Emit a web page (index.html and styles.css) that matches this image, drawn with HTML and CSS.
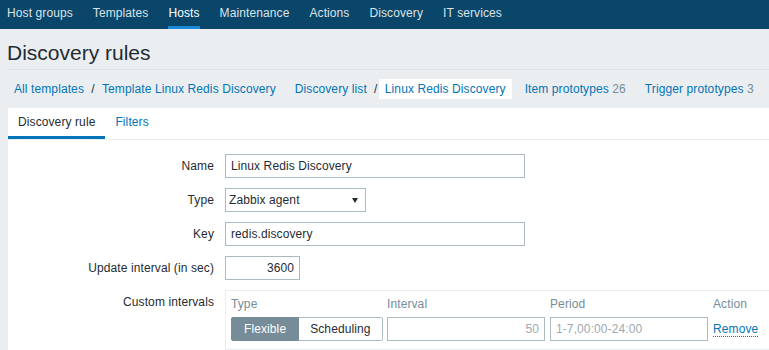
FILE: index.html
```html
<!DOCTYPE html>
<html lang="en">
<head>
<meta charset="utf-8">
<title>Discovery rules</title>
<link rel="stylesheet" href="styles.css">
</head>
<body>
<header class="topnav">
  <ul>
    <li><a href="#">Host groups</a></li>
    <li><a href="#">Templates</a></li>
    <li><a href="#" class="active">Hosts</a></li>
    <li><a href="#">Maintenance</a></li>
    <li><a href="#">Actions</a></li>
    <li><a href="#">Discovery</a></li>
    <li><a href="#">IT services</a></li>
  </ul>
</header>
<main class="page">
  <div class="page-title"><h1>Discovery rules</h1></div>
  <nav class="crumbs">
    <div class="crumb-group">
      <a href="#">All templates</a><span class="sep">/</span><a href="#">Template Linux Redis Discovery</a>
    </div>
    <div class="crumb-group">
      <a href="#">Discovery list</a><span class="sep">/</span><span class="current">Linux Redis Discovery</span>
    </div>
    <div class="crumb-group"><a href="#">Item prototypes <span class="count">26</span></a></div>
    <div class="crumb-group"><a href="#">Trigger prototypes <span class="count">3</span></a></div>
  </nav>
  <section class="panel">
    <ul class="tabs">
      <li><a href="#" class="active">Discovery rule</a></li>
      <li><a href="#">Filters</a></li>
    </ul>
    <form class="form">
      <label class="lbl">Name</label>
      <div><input class="input wide" type="text" value="Linux Redis Discovery"></div>
      <label class="lbl">Type</label>
      <div>
        <div class="select"><span>Zabbix agent</span>
          <svg class="arrow" width="6" height="5" viewBox="0 0 6 5"><polygon points="0,0 6,0 3,5" fill="#1f2c33"/></svg>
        </div>
      </div>
      <label class="lbl">Key</label>
      <div><input class="input wide" type="text" value="redis.discovery"></div>
      <label class="lbl">Update interval (in sec)</label>
      <div><input class="input num" type="text" value="3600"></div>
      <label class="lbl top">Custom intervals</label>
      <div class="intervals">
        <div class="th">Type</div>
        <div class="th">Interval</div>
        <div class="th">Period</div>
        <div class="th">Action</div>
        <div class="seg">
          <button type="button" class="seg-btn on">Flexible</button><button type="button" class="seg-btn">Scheduling</button>
        </div>
        <input class="input ph right" type="text" placeholder="50">
        <input class="input ph" type="text" placeholder="1-7,00:00-24:00">
        <a href="#" class="remove">Remove</a>
      </div>
    </form>
  </section>
</main>
</body>
</html>
```
FILE: styles.css
```css
* { box-sizing: border-box; }
html, body { margin: 0; overflow: hidden; }
body {
  background: #ebeef0;
  font: 12px "Liberation Sans", Arial, sans-serif;
  letter-spacing: 0.1px;
  color: #1f2c33;
  width: 769px;
  height: 350px;
}
a { text-decoration: none; }

.topnav { background: #0a466a; height: 29px; }
.topnav ul { display: flex; gap: 20px; margin: 0; padding: 0 0 0 7px; list-style: none; }
.topnav a {
  display: block;
  padding-top: 1px;
  line-height: 25px;
  border-bottom: 3px solid transparent;
  color: #dbe3e8;
  white-space: nowrap;
}
.topnav a.active { color: #fff; border-bottom-color: #1a8ad4; }

.page-title { margin-left: 7px; padding: 12px 0 4px; border-bottom: 1px solid #dde3e6; }
h1 { margin: 0; font-size: 21px; font-weight: normal; line-height: 24px; letter-spacing: 0; }

.crumbs { display: flex; gap: 7px; padding: 9px 0 9px 8px; }
.crumb-group { display: flex; }
.crumbs a, .crumbs .current { padding: 0 6px; line-height: 20px; color: #0275b8; white-space: nowrap; }
.crumbs .current { background: #fff; }
.crumbs .sep { width: 6px; text-align: center; line-height: 20px; color: #1f2c33; }
.crumbs .count { color: #768d99; }

.panel { margin-left: 8px; background: #fff; height: 242px; overflow: hidden; }
.tabs { display: flex; margin: 0; padding: 0; list-style: none; border-bottom: 1px solid #ebeef0; }
.tabs a {
  display: block;
  padding: 0 10px;
  line-height: 28px;
  border-bottom: 3px solid transparent;
  color: #0275b8;
}
.tabs a.active { color: #1f2c33; border-bottom-color: #0275b8; }

.form {
  display: grid;
  grid-template-columns: 206px auto;
  column-gap: 11px;
  row-gap: 10px;
  padding-top: 14px;
  justify-content: start;
}
.lbl { text-align: right; line-height: 24px; }
.lbl.top { line-height: 14px; padding-top: 5px; }

.input {
  display: block;
  height: 24px;
  border: 1px solid #acbbc2;
  padding: 0 5px;
  font: inherit;
  letter-spacing: inherit;
  color: #1f2c33;
  background: #fff;
  outline: none;
  border-radius: 0;
}
.input.wide { width: 300px; }
.input.num { width: 75px; text-align: right; }
.input.right { text-align: right; }
.input.ph::placeholder { color: #9ea9b0; opacity: 1; }

.select {
  width: 141px;
  height: 24px;
  border: 1px solid #acbbc2;
  padding: 0 7px 0 3px;
  display: flex;
  align-items: center;
  justify-content: space-between;
}
.arrow { display: block; margin-top: 1px; }

.intervals {
  border: 1px solid #ebeef0;
  padding: 6px 5px 8px;
  display: grid;
  grid-template-columns: 151px 158px 158px 60px;
  column-gap: 5px;
  row-gap: 6px;
  width: max-content;
}
.th { color: #768d99; line-height: 14px; }
.seg { display: flex; }
.seg-btn {
  height: 24px;
  padding: 0 11px;
  font: inherit;
  letter-spacing: inherit;
  color: #1f2c33;
  background: #fff;
  border: 1px solid #acbbc2;
  border-left: 0;
  border-radius: 0 2px 2px 0;
  cursor: pointer;
}
.seg-btn.on {
  padding: 0 12px;
  background: #768d99;
  border: 1px solid #768d99;
  color: #fff;
  border-radius: 2px 0 0 2px;
}
.remove {
  align-self: center;
  justify-self: start;
  line-height: 14px;
  color: #0275b8;
  border-bottom: 1px dotted #0275b8;
}
```
